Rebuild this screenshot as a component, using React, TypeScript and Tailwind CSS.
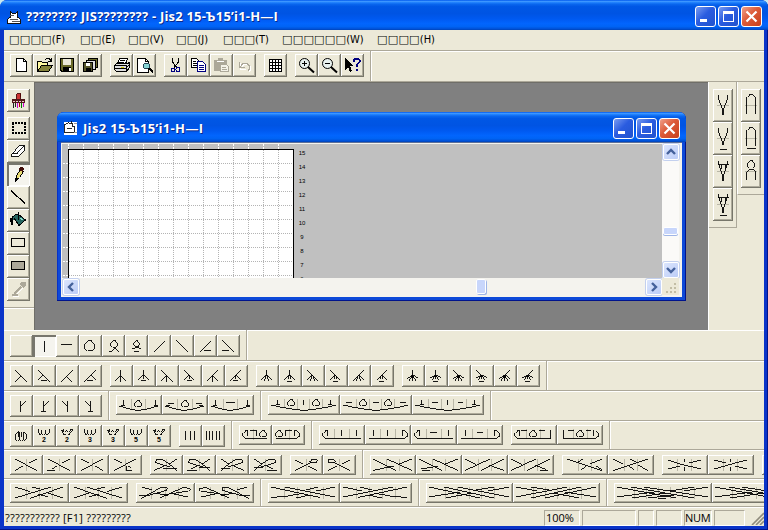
import React from 'react';

interface Glyph {
    d?: string;
    grey?: string;
    digit?: string;
    pressed?: boolean;
}

const titleGradient =
    'bg-[linear-gradient(180deg,#0058ee_0%,#3c96ff_5%,#1c7dfb_9%,#0a66ee_14%,#0057e5_22%,#0054e3_45%,#0059f0_62%,#0265fd_78%,#0064f6_88%,#0054dc_95%,#0043b8_100%)]';

const menus = [
    { label: '□□□□', letter: '(F)', width: 'w-[71px]' },
    { label: '□□', letter: '(E)', width: 'w-[48px]' },
    { label: '□□', letter: '(V)', width: 'w-[48px]' },
    { label: '□□', letter: '(J)', width: 'w-[47px]' },
    { label: '□□□', letter: '(T)', width: 'w-[59px]' },
    { label: '□□□□□□', letter: '(W)', width: 'w-[95px]' },
    { label: '□□□□', letter: '(H)', width: 'w-[70px]' },
];

const basic: Glyph[] = [
    {},
    { d: 'M11.5 6V17', pressed: true },
    { d: 'M5 9.5H16' },
    { d: 'M8.5 5.5H12.5L15.5 8.5V12.5L12.5 15.5H8.5L5.5 12.5V8.5Z' },
    { d: 'M7 16.5H8.5L13.5 12L15.5 9.5V7.5L13.5 5.5H10.5L8.5 7.5V9.5L10.5 12L15.5 16.5H17' },
    { d: 'M7 13.5H9L13.5 11L14.5 9V7.5L12.5 5.5H10.5L8.5 7.5V9L9.5 11L14 13.5H16M9 16.5H14' },
    { d: 'M5 17L16.5 5.5' },
    { d: 'M5 5L16.5 16.5' },
    { d: 'M5 17L16.5 5.5M10 15.5H17' },
    { d: 'M5 5L16.5 16.5M5 15.5H12' },
];

const twoTogether: Glyph[] = [
    { d: 'M5 5L16.5 16.5M5 17L11 11' },
    { d: 'M5 5L16.5 16.5M5 15L10 10M8 15.5H14' },
    { d: 'M17 5L5 17M16.5 16.5L10.5 10.5' },
    { d: 'M17 5L5 17M16.5 14.5L12 10M8 15.5H14' },
];

const threeTogether: Glyph[] = [
    { d: 'M10.5 5V17M10 11L5 16M11 11L16 16' },
    { d: 'M10.5 5V14M10 10L5 15M11 10L16 15M8 15.5H13' },
    { d: 'M5 5L16.5 16.5M10.5 10V17M10 11L5 16' },
    { d: 'M5 5L15 15M10.5 10V14M10 10L5 15M8 15.5H13' },
    { d: 'M16 5L5 16M10.5 10V17M11 11L16 16' },
    { d: 'M16 5L5 16M10.5 10V14M11 10L16 15M8 15.5H13' },
];

const fourTogether: Glyph[] = [
    { d: 'M10.5 5V10M10 10L5 15M11 10L16 15M10.5 10L8 16M10.5 10L13 16' },
    { d: 'M10.5 5V10M10 10L5 15M11 10L16 15M10.5 10L9 14M10.5 10L12 14M8 16.5H13' },
    { d: 'M5 5L16 16M10 10L5 15M10.5 10L8 16M10.5 10L13 16' },
    { d: 'M5 5L15 15M10 10L5 15M10.5 10L9 14M10.5 10L12 14M8 16.5H13' },
    { d: 'M16 5L5 16M11 10L16 15M10.5 10L8 16M10.5 10L13 16' },
    { d: 'M16 5L6 15M11 10L16 15M10.5 10L9 14M10.5 10L12 14M8 16.5H13' },
];

const fiveTogether: Glyph[] = [
    { d: 'M10.5 5V16M10.5 10L5 14M10.5 10L16 14M10.5 10L7 16M10.5 10L14 16M9 11.5H12M9 12.5H12' },
    { d: 'M10.5 5V14M10.5 10L5 13M10.5 10L16 13M10.5 10L7 15M10.5 10L14 15M9 11.5H12M8 16.5H13' },
    { d: 'M5 5L10.5 10.5V16M10.5 10L5 14M10.5 10L16 14M10.5 10L7 16M10.5 10L14 16M9 11.5H12M9 12.5H12' },
    { d: 'M5 5L10.5 10.5V14M10.5 10L5 13M10.5 10L16 13M10.5 10L7 15M10.5 10L14 15M9 11.5H12M8 16.5H13' },
    { d: 'M16 5L10.5 10.5V16M10.5 10L5 14M10.5 10L16 14M10.5 10L7 16M10.5 10L14 16M9 11.5H12M9 12.5H12' },
    { d: 'M16 5L10.5 10.5V14M10.5 10L5 13M10.5 10L16 13M10.5 10L7 15M10.5 10L14 15M9 11.5H12M8 16.5H13' },
];

const branches: Glyph[] = [
    { d: 'M10.5 6V17M11 11L16 6' },
    { d: 'M10.5 6V16M11 11L16 6M8 16.5H13' },
    { d: 'M11.5 6V17M11 11L6 6' },
    { d: 'M11.5 6V16M11 11L6 6M9 16.5H14' },
];

const fan3: Glyph[] = [
    { d: 'M3 11L14 14L22 15.5L31 14L42 11M7.5 5V10M5 10.5H9M39.5 5V10M38 10.5H42M20.5 5.5H23.5L25.5 7.5V9.5L23.5 11.5H20.5L18.5 9.5V7.5Z', grey: 'M15.5 4V15M29.5 4V15' },
    { d: 'M3 11L14 14L22 15.5L31 14L42 11M6 8.5H12M4 10.5H8M34 8.5H40M37 10.5H41M21.5 5.5H24.5L26.5 7.5V9.5L24.5 11.5H21.5L19.5 9.5V7.5Z', grey: 'M15.5 4V15M30.5 4V15' },
    { d: 'M3 11L14 14L22 15.5L31 14L42 11M7.5 5V10M5 10.5H9M39.5 5V10M38 10.5H42M18 7.5H27', grey: 'M15.5 4V15M29.5 4V15' },
];

const fan5: Glyph[] = [
    { d: 'M3 10L12 12L24 14L36 15.5L48 14L60 12L68 10M9.5 5V10M8 9.5H12M21.5 4.5H24.5L26.5 6.5V8.5L24.5 10.5H21.5L19.5 8.5V6.5ZM35.5 5V10M46.5 4.5H49.5L51.5 6.5V8.5L49.5 10.5H46.5L44.5 8.5V6.5ZM62.5 5V10M60 9.5H64', grey: 'M16.5 4V13M29.5 4V14M41.5 4V14M54.5 4V13' },
    { d: 'M3 10L12 12L24 14L36 15.5L48 14L60 12L68 10M6 7.5H12M21.5 4.5H24.5L26.5 6.5V8.5L24.5 10.5H21.5L19.5 8.5V6.5ZM33 7.5H39M46.5 4.5H49.5L51.5 6.5V8.5L49.5 10.5H46.5L44.5 8.5V6.5ZM60 7.5H66', grey: 'M16.5 4V13M29.5 4V14M41.5 4V14M54.5 4V13' },
    { d: 'M3 10L12 12L24 14L36 15.5L48 14L60 12L68 10M9.5 5V10M8 9.5H12M20 7.5H26M35.5 5V10M46 7.5H51M62.5 5V10M60 9.5H64', grey: 'M16.5 4V13M29.5 4V14M41.5 4V14M54.5 4V13' },
];

const coilUp = 'M5.5 4V7L7 9.5L8.5 7.5V4.5M8.5 7.5L10.5 9.5L12.5 7.5V4.5M12.5 7.5L14 9.5L16.5 7V4';
const coilDown = 'M5.5 5L7.5 4.5L8.5 7M9 7L10.5 4.5L12 7M12.5 7L14 4.5L16.5 5M5.5 5L8 9.5M16.5 5L13 9.5M8 9.5H10M12 9.5H14';
const wraps: Glyph[] = [
    { d: 'M7.5 6.5L5.5 8.5V13.5L7.5 15.5L9.5 13.5V7M8 6V12M9.5 13.5L11.5 15.5L13.5 13.5V7M13.5 15.5L16.5 13V8.5L14.5 6.5M11.5 7V12' },
    { d: coilUp, digit: '2' },
    { d: coilDown, digit: '2' },
    { d: coilUp, digit: '3' },
    { d: coilDown, digit: '3' },
    { d: coilUp, digit: '5' },
    { d: coilDown, digit: '5' },
];

const bars: Glyph[] = [{ d: 'M6.5 6V15M11.5 6V15M15.5 6V15' }, { d: 'M4.5 6V15M7.5 6V15M10.5 6V15M14.5 6V15M17.5 6V15' }];

const slip: Glyph[] = [
    { d: 'M9 5.5H6L3.5 8V11L6 13.5H28M8.5 5V11M11 5.5H17M17.5 5V11M22.5 5.5H25.5L27.5 7.5V9.5L25.5 11.5H22.5L20.5 9.5V7.5Z', grey: 'M14.5 4V15' },
    { d: 'M5.5 5.5H8.5L10.5 7.5V9.5L8.5 11.5H5.5L3.5 9.5V7.5ZM4 13.5H24L27.5 11V8L25 5.5H23M13.5 5V11M14 5.5H20M22.5 5V11', grey: 'M17.5 4V15' },
];

const pass: Glyph[] = [
    { d: 'M9 5.5H6L3.5 8V11L6 13.5H42M8.5 5V11M22.5 5V11M37.5 5V11', grey: 'M15.5 4V14M30.5 4V14' },
    { d: 'M4 13.5H39L42.5 11V8L40 5.5H37M8.5 5V11M22.5 5V11M37.5 5V11', grey: 'M15.5 4V14M30.5 4V14' },
    { d: 'M9 5.5H6L3.5 8V11L6 13.5H42M8.5 5V11M19 7.5H26M37.5 5V11', grey: 'M15.5 4V14M30.5 4V14' },
    { d: 'M4 13.5H39L42.5 11V8L40 5.5H37M8.5 5V11M20 7.5H26M37.5 5V11', grey: 'M15.5 4V14M30.5 4V14' },
];

const yarnOver: Glyph[] = [
    { d: 'M8 5.5H6L3.5 8V11L6 13.5H39.5V5M8.5 5V11M10 5.5H16M28 5.5H34M20.5 5.5H23.5L25.5 7.5V9.5L23.5 11.5H20.5L18.5 9.5V7.5Z', grey: 'M15.5 4V14M29.5 4V14' },
    { d: 'M6.5 5V13.5H38L41.5 11V8L39 5.5M36.5 5V11M11 5.5H17M29 5.5H34M21.5 5.5H24.5L26.5 7.5V9.5L24.5 11.5H21.5L19.5 9.5V7.5Z', grey: 'M16.5 4V14M30.5 4V14' },
];

const cross2: Glyph[] = [
    { d: 'M5 4L27 15.5M27 4L19 8M13 11L5 15.5', grey: 'M16.5 4V16' },
    { d: 'M5 4L27 15.5M27 4L19 8M14 11L9 14M4 15.5H12', grey: 'M16.5 4V16' },
    { d: 'M27 4L5 15.5M5 4L13 8M19 11L27 15.5', grey: 'M16.5 4V16' },
    { d: 'M27 4L5 15.5M5 4L13 8M17.5 11V15.5H23M19 11L22 13', grey: 'M16.5 4V16' },
];

const crossTwist: Glyph[] = [
    { d: 'M20 12L5 7.5L6 4.5H12L18 8L27 15.5M27 4L19 9M14 11L4 15.5M13 13.5H27', grey: 'M16.5 4V16' },
    { d: 'M20 12L5 7.5L6 4.5H12L18 8L27 15.5M27 4L19 9M14 11L8 14M4 15.5H14M16 12.5H27', grey: 'M16.5 4V16' },
    { d: 'M12 12L27 7.5L26 4.5H20L14 8L5 15.5M5 4L13 9M18 11L28 15.5M5 13.5H14', grey: 'M16.5 4V16' },
    { d: 'M12 12L27 7.5L26 4.5H20L14 8L5 15.5M5 4L13 9M18 11L24 14M18 15.5H28M5 12.5H14', grey: 'M16.5 4V16' },
];

const crossLoop: Glyph[] = [
    { d: 'M5 5L13 9M18 11L27 15.5M5 15.5L20 8L26 7.5L27 4.5H21L19 6.5L22 8', grey: 'M16.5 4V16' },
    { d: 'M27 5L19 9M14 11L5 15.5M27 15.5L12 8L6 7.5L5 4.5H11L13 6.5L10 8', grey: 'M16.5 4V16' },
];

const cross3: Glyph[] = [
    { d: 'M3 4L26 15.5M17 4L42 15.5M42 4L28 9.5M24 11L16 12.5L3 15.5', grey: 'M16.5 4V16M29.5 4V16' },
    { d: 'M3 4L26 15.5M17 4L42 15.5M42 4L28 9.5M22 11L14 12.5L5 14M6 15.5H14', grey: 'M16.5 4V16M29.5 4V16' },
    { d: 'M42 4L19 15.5M28 4L3 15.5M3 4L14 9.5M27 10L42 15.5', grey: 'M16.5 4V16M29.5 4V16' },
    { d: 'M42 4L19 15.5M28 4L3 15.5M3 4L14 9.5M27 10L38 14.5M32 15.5H40', grey: 'M16.5 4V16M29.5 4V16' },
];

const cross3Over: Glyph[] = [
    { d: 'M5 4L40 15.5M40 4L28 9M21 4L16 7M24 11L19 15M40 15L34 11', grey: 'M16.5 4V16M29.5 4V16' },
    { d: 'M40 4L5 15.5M5 4L15 9M22 4L28 7M21 11L26 15M30 10L40 15.5', grey: 'M16.5 4V16M29.5 4V16' },
];

const crossCentre: Glyph[] = [
    { d: 'M6 5L18 9L39 14M39 5L27 8M18 11L6 14M22.5 4V7M22.5 12V16', grey: 'M15.5 4V16M29.5 4V16' },
    { d: 'M39 5L27 8L6 14M6 5L18 8M27 11L39 14M22.5 4V7M22.5 12V16', grey: 'M15.5 4V16M29.5 4V16' },
    { d: 'M6 5L18 9L39 14M39 5L27 8M18 11L6 14', grey: 'M15.5 4V16' },
];

const cable4: Glyph[] = [
    { d: 'M53 4L20 15.5M41 4L5 15M5 4L20 8.5M22 4L30 6M28 11L38 14M38 10L53 15', grey: 'M16.5 4V16M29.5 4V16M42.5 4V16' },
    { d: 'M5 4L38 15.5M18 4L53 15M53 4L38 8.5M36 4L28 6M30 11L20 14M20 10L5 15', grey: 'M16.5 4V16M29.5 4V16M42.5 4V16' },
];

const cable4Twist: Glyph[] = [
    { d: 'M3 12.5H12L30 7.5L31 4.5H25L5 15.5M27 12L52 8L54 5.5L47 4.5L24 15M6 4L16 7M20 10L32 13M38 11L52 14', grey: 'M15.5 4V16M29.5 4V16M42.5 4V16' },
    { d: 'M55 12.5H46L28 7.5L27 4.5H33L54 15.5M31 12L6 8L4 5.5L11 4.5L34 15M52 4L42 7M38 10L26 13M20 11L6 14', grey: 'M15.5 4V16M29.5 4V16M42.5 4V16' },
];

const cable5: Glyph[] = [
    { d: 'M3 4L52 14.5M17 4L67 14M67 4L48 8M50 4L38 7M36 10L20 13L3 14.5M42 12L28 15', grey: 'M16.5 4V16M29.5 4V16M42.5 4V16M55.5 4V16' },
    { d: 'M67 4L18 14.5M53 4L3 14M3 4L22 8M20 4L32 7M34 10L50 13L67 14.5M28 12L42 15', grey: 'M16.5 4V16M29.5 4V16M42.5 4V16M55.5 4V16' },
];

const cable6: Glyph[] = [
    { d: 'M3 4L54 15M18 4L68 15M32 4L83 14M83 4L62 8M68 4L50 7M46 10L20 15M34 9L3 14', grey: 'M19.5 4V16M31.5 4V16M43.5 4V16M55.5 4V16M68.5 4V16' },
    { d: 'M83 4L32 15M68 4L18 15M54 4L3 14M3 4L24 8M18 4L36 7M40 10L66 15M52 9L83 14', grey: 'M20.5 4V16M32.5 4V16M44.5 4V16M56.5 4V16M68.5 4V16' },
];

const cable7: Glyph[] = [
    { d: 'M3 4L62 15M17 4L80 15M30 4L94 14M94 4L70 8M80 4L56 8M52 10L18 15M40 9L3 14M60 12L34 15M44 15.5H52', grey: 'M20.5 4V16M32.5 4V16M44.5 4V16M56.5 4V16M68.5 4V16M80.5 4V16' },
    { d: 'M3 4L62 15M17 4L80 15M30 4L94 14M94 4L56 8M52 10L18 15M40 9L3 14', grey: 'M20.5 4V16M32.5 4V16M44.5 4V16M56.5 4V16' },
];

const ToolButton: React.FC<{ size: string; pressed?: boolean; children?: React.ReactNode }> = ({ size, pressed, children }) => (
    <button
        className={`${size} block shrink-0 ${
            pressed
                ? 'bg-[#f5f4ee] shadow-[inset_2px_2px_#77766d,inset_-1px_-1px_#fff]'
                : 'bg-[#ece9d8] shadow-[inset_-1px_-1px_#77766a,inset_1px_1px_#fff,inset_-2px_-2px_#aeab9b]'
        }`}
    >
        {children}
    </button>
);

const StitchButtons: React.FC<{ items: Glyph[]; size: string }> = ({ items, size }) => (
    <div className="flex shrink-0">
        {items.map((item, index) => (
            <ToolButton key={index} size={size} pressed={item.pressed}>
                <svg className="block h-full w-full" fill="none" strokeWidth="0.9" shapeRendering="crispEdges">
                    {item.grey && <path d={item.grey} stroke="#b4b1a2" />}
                    {item.d && <path d={item.d} stroke="#000" />}
                    {item.digit && (
                        <text x="9" y="17" fontSize="7" fontWeight="700" fill="#000" fontFamily="Liberation Sans">
                            {item.digit}
                        </text>
                    )}
                </svg>
            </ToolButton>
        ))}
    </div>
);

const Divider = ({ className = '' }: { className?: string }) => (
    <div className={`w-[2px] shrink-0 self-stretch border-l border-r border-l-[#aca899] border-r-white ${className}`} />
);

const Row: React.FC<{ height: string; children: React.ReactNode }> = ({ height, children }) => (
    <div className={`${height} flex shrink-0 items-start overflow-hidden border-b border-b-[#aca899] pl-[6px] shadow-[inset_0_1px_#fff]`}>
        {children}
    </div>
);

const small = 'w-[23px] h-[23px]';
const stitch = 'w-[23px] h-[22px]';

const toolbarIcons: React.ReactNode[][] = [
    [
        <g key="new"><path d="M6.5 4.5H13.5L16.5 7.5V17.5H6.5Z" fill="#fff" stroke="#000" /><path d="M13.5 4.5V7.5H16.5" stroke="#000" /></g>,
        <g key="open"><path d="M4.5 17.5V7.5H8.5L9.5 8.5H14.5V11.5" fill="#fff9a0" stroke="#000" /><path d="M4.5 17.5L8.5 11.5H19.5L15.5 17.5Z" fill="#85833a" stroke="#000" /><path d="M12 5.5L13.5 4.5H16L18.5 7M18.5 4V7.5H15" stroke="#000" /></g>,
        <g key="save"><path d="M4.5 4.5H17.5V17.5H6L4.5 16Z" fill="#6b6b2a" stroke="#000" strokeWidth="1.6" /><path d="M7 5H15V11H7Z" fill="#ece9d8" /><path d="M7 13H15V18H7Z" fill="#000" /><path d="M13 14H15V17H13Z" fill="#fff" /></g>,
        <g key="all"><path d="M9.5 4.5H18.5V13.5H9.5Z" fill="#6b6b2a" stroke="#000" /><path d="M7.5 6.5H16.5V15.5H7.5Z" fill="#ddd" stroke="#000" /><path d="M4.5 8.5H13.5V17.5H4.5Z" fill="#55552a" stroke="#000" /><path d="M7 9H11V12H7Z" fill="#fff" /><path d="M7 14H12V17H7Z" fill="#000" /></g>,
    ],
    [
        <g key="print"><path d="M7.5 10L9.5 4.5H17.5L15.5 10" fill="#fff" stroke="#000" /><path d="M10 6.5H15M9 8.5H14" stroke="#000" /><path d="M4.5 11.5L6.5 9.5H17.5L19.5 8.5V13.5L16.5 17.5H6.5L4.5 15.5Z" fill="#ddd" stroke="#000" /><path d="M4 11.5H16.5V17M5 14.5H16M19 11.5L16 13.5" stroke="#000" /><path d="M11 13H14" stroke="#d5c800" /></g>,
        <g key="preview"><path d="M4.5 4.5H12.5L15.5 7.5V18.5H4.5Z" fill="#fff" stroke="#000" /><path d="M12.5 4.5V7.5H15.5" stroke="#000" /><circle cx="13.5" cy="12" r="3" fill="#86d4d4" stroke="#245" /><path d="M16 14L20 18.5" stroke="#000" strokeWidth="2" /></g>,
    ],
    [
        <g key="cut"><path d="M8.5 4V8L13 14M14.5 4V8L10 14" stroke="#000" /><circle cx="9" cy="16" r="2" stroke="#000080" /><circle cx="14" cy="15.5" r="2" stroke="#000080" /></g>,
        <g key="copy"><path d="M4.5 4.5H9.5L12.5 7.5V13.5H4.5Z" fill="#fff" stroke="#000" /><path d="M6 7.5H9M6 9.5H10M6 11.5H10" stroke="#000" /><path d="M10.5 7.5H15.5L18.5 10.5V17.5H10.5Z" fill="#fff" stroke="#000080" /><path d="M12 11.5H17M12 13.5H17M12 15.5H17" stroke="#000080" /></g>,
        <g key="paste"><path d="M4 6H17V17H4Z" fill="#aca899" /><path d="M8 4H13V7H8Z" fill="#aca899" /><path d="M7 7.5H14" stroke="#fff" /><path d="M10.5 10.5H16.5L18.5 12.5V17.5H10.5Z" fill="#f4f2e8" stroke="#aca899" /><path d="M12 13.5H16M12 15.5H17" stroke="#aca899" /></g>,
        <g key="undo"><path d="M6.5 8V14H12M7 13L10 9.5H14L16.5 12V15L15 17" stroke="#fff" transform="translate(1 1)" /><path d="M6.5 8V13.5H12M7 13L10 9.5H14L16.5 12V15L15 17" stroke="#aca899" /></g>,
    ],
    [<g key="grid"><path d="M5.5 5.5H17.5V17.5H5.5ZM8.5 5V18M11.5 5V18M14.5 5V18M5 8.5H18M5 11.5H18M5 14.5H18" fill="#fff" stroke="#000" /></g>],
    [
        <g key="in" shapeRendering="auto"><circle cx="9.5" cy="9.5" r="5" fill="#e8f1ee" stroke="#000" /><path d="M7 9.5H12M9.5 7V12" stroke="#000" /><path d="M13 13L19 18.5" stroke="#000" strokeWidth="2" /></g>,
        <g key="out" shapeRendering="auto"><circle cx="9.5" cy="9.5" r="5" fill="#e8f1ee" stroke="#000" /><path d="M7 9.5H12" stroke="#000" /><path d="M13 13L19 18.5" stroke="#000" strokeWidth="2" /></g>,
        <g key="help"><path d="M4 4V16L7 13L9 18L11 17L9 12H13Z" fill="#000" /><path d="M12.5 8V6L14 4.5H17L18.5 6V8L15.5 11V13M15.5 15V17" stroke="#000080" strokeWidth="2" /></g>,
    ],
];

const sideIcons = [
    <g key="select"><path d="M5 6H19M5 16H19" stroke="#000" strokeWidth="2" strokeDasharray="2 1" /><path d="M6 6V17M18 6V17" stroke="#000" strokeWidth="2" strokeDasharray="2 1" /></g>,
    <g key="eraser"><path d="M4.5 13.5L11.5 5.5H17.5V9.5L10.5 16.5H4.5Z" fill="#fff" stroke="#000" strokeWidth="0.9" /><path d="M4.5 13.5H10L17 6" stroke="#000" strokeWidth="0.9" /></g>,
    <g key="pencil"><path d="M8.5 17.5L9.5 12.5L13.5 6.5L16.5 8.5L12.5 14.5Z" fill="#e8dc74" stroke="#000" /><path d="M13 4H16L17 6L16 9L12 7Z" fill="#400c08" /><path d="M8 15V19L11 16Z" fill="#000" /></g>,
    <g key="line"><path d="M4 4.5L18 17.5" stroke="#000" strokeWidth="1.3" /></g>,
    <g key="fill"><path d="M5.5 15V8L8 6L11 5L18.5 11L12 16.5L7 9" fill="#27665f" stroke="#000" /><path d="M3 9H6V16H4Z" fill="#000" /><path d="M11 3V11" stroke="#000" /><path d="M13 9L16 11" stroke="#8dc" /></g>,
    <g key="rect"><path d="M4.5 6.5H17.5V14.5H4.5Z" stroke="#000" /></g>,
    <g key="rectfill"><path d="M4.5 6.5H17.5V14.5H4.5Z" fill="#aca899" stroke="#000" /></g>,
    <g key="picker"><path d="M5 16.5H11M7 16L14 9" stroke="#aca899" strokeWidth="2" /><path d="M14 4H19V8L16 10L13 7Z" fill="#aca899" /><path d="M6 18.5H12M10 16L16 10" stroke="#fff" /></g>,
];

const raised = [
    'M5.5 6V10L9.5 20V26M14.5 6V10L10.5 20V26',
    'M5.5 6V10L9.5 20V23M14.5 6V10L10.5 20V23M7 27.5H14',
    'M5.5 6V9L9.5 20V26M14.5 6V9L10.5 20V26M5 9.5H16M8.5 10V14M12.5 10V14',
    'M5.5 6V9L9.5 20V25M14.5 6V9L10.5 20V25M5 9.5H16M8.5 10V14M12.5 10V14M7 27.5H14',
];

const slipped = [
    'M5.5 25V8L8 5.5H12L14.5 8V25',
    'M5.5 24V8L8 5.5H12L14.5 8V24M6 26.5H15',
    'M5.5 25V17L8.5 14H11.5L14.5 17V25M8.5 5.5H11.5L13.5 7.5V10.5L11.5 13M8.5 5.5L6.5 7.5V10.5L8.5 13',
];

const TallButton = ({ d }: { d: string }) => (
    <ToolButton size="w-[20px] h-[33px]">
        <svg className="block h-full w-full" fill="none" strokeWidth="0.9" shapeRendering="crispEdges">
            <path d="M4 16.5H16" stroke="#b4b1a2" />
            <path d={d} stroke="#000" />
        </svg>
    </ToolButton>
);

const WindowControls = () => (
    <div className="flex gap-[2px]">
        <span className="h-[21px] w-[21px] rounded-[3px] border border-white bg-[linear-gradient(135deg,#7a9cf0,#2a5ce0_45%,#2153cd)]">
            <span className="ml-[4px] mt-[12px] block h-[3px] w-[7px] bg-white" />
        </span>
        <span className="h-[21px] w-[21px] rounded-[3px] border border-white bg-[linear-gradient(135deg,#7a9cf0,#2a5ce0_45%,#2153cd)]">
            <span className="ml-[4px] mt-[4px] block h-[11px] w-[11px] border border-t-[3px] border-white" />
        </span>
        <span className="h-[21px] w-[21px] rounded-[3px] border border-white bg-[linear-gradient(135deg,#f0a08a,#dc5a38_45%,#c8401c)]">
            <svg className="block h-[19px] w-[19px]" viewBox="0 0 19 19">
                <path d="M4.5 4.5L14.5 14.5M14.5 4.5L4.5 14.5" stroke="#fff" strokeWidth="2.2" />
            </svg>
        </span>
    </div>
);

const ScrollArrow = ({ d }: { d: string }) => (
    <span className="block h-[16px] w-[16px] shrink-0 rounded-[2px] border border-white bg-[linear-gradient(135deg,#dbe5fd,#bccdf7)] shadow-[0_0_0_1px_#c3d0ee]">
        <svg className="block h-[14px] w-[14px]" viewBox="0 0 14 14" fill="none">
            <path d={d} stroke="#44619b" strokeWidth="2.4" />
        </svg>
    </span>
);

const columns = Array.from({ length: 15 }, (_, i) => i);
const lines = Array.from({ length: 9 }, (_, i) => i);
const rowNumbers = [15, 14, 13, 12, 11, 10, 9, 8, 7, 6];

const PatternWindow = () => (
    <div className="ml-[23px] mt-[30px] flex h-[189px] w-[629px] flex-col overflow-hidden rounded-t-[7px] bg-[#0d49d8] shadow-[inset_-1px_-1px_#00138c,inset_1px_0_#0831c8]">
        <div className={`${titleGradient} flex h-[30px] shrink-0 items-center pl-[6px] pr-[6px] pt-[3px]`}>
            <svg className="block h-[16px] w-[16px]" fill="none" shapeRendering="crispEdges">
                <path d="M1 1H14V14H1Z" fill="#fff" />
                <path d="M1.5 3V11.5H9.5L11.5 9.5V5.5H9.5V2.5H6.5L5.5 0.5L3.5 2.5ZM4 7.5H9M8 0V3" stroke="#111" strokeWidth="0.9" />
                <path d="M11 2.5H14M11 11.5H14" stroke="#9a9a9a" />
            </svg>
            <span className="ml-[4px] flex-1 whitespace-pre text-[13px] font-bold tracking-[0.32px] text-white [text-shadow:1px_1px_#0a2a8c]">Jis2 15-Ъ15’i1-H—I</span>
            <WindowControls />
        </div>
        <div className="mx-[4px] mb-[4px] flex flex-1 flex-col bg-[#f4f3ee] pt-[2px] pl-[1px] pr-[3px] shadow-[inset_0_1px_#5c6f99]">
            <div className="flex h-[134px]">
                <div className="flex h-full flex-1 overflow-hidden bg-[#c0c0c0]">
                    <svg className="block h-[134px] w-[232px] shrink-0" shapeRendering="crispEdges" fill="none">
                        <path d="M6 5H231V134H6Z" fill="#fff" />
                        {columns.map((c) => (
                            <path key={c} d={`M${6.5 + c * 15} 0V5`} stroke="#fff" strokeDasharray="2 1" />
                        ))}
                        {columns.slice(1).map((c) => (
                            <path key={c} d={`M${6.5 + c * 15} 6V134`} stroke="#b4b4b4" strokeDasharray="1 1" />
                        ))}
                        {lines.map((r) => (
                            <path key={r} d={`M7 ${19.5 + r * 14}H231`} stroke="#b4b4b4" strokeDasharray="1 1" />
                        ))}
                        {lines.map((r) => (
                            <path key={r} d={`M1 ${19.5 + r * 14}H6`} stroke="#fff" strokeDasharray="2 1" />
                        ))}
                        <path d="M6.5 134V5.5H231.5V134" stroke="#000" />
                    </svg>
                    <div className="w-[16px] pt-[2px] text-center font-['Liberation_Sans'] text-[6px] leading-[14px] text-black">
                        {rowNumbers.map((n) => (
                            <div key={n}>{n}</div>
                        ))}
                    </div>
                </div>
                <div className="flex w-[17px] flex-col items-center bg-[#fbfaf8]">
                    <ScrollArrow d="M3 9L7 5L11 9" />
                    <span className="mt-[67px] h-[8px] w-[15px] rounded-[2px] border border-white bg-[#c8d6fb] shadow-[0_1px_#9fb5e6]" />
                    <span className="flex-1" />
                    <ScrollArrow d="M3 5L7 9L11 5" />
                </div>
            </div>
            <div className="flex h-[17px] items-center">
                <span className="w-[1px]" />
                <ScrollArrow d="M9 3L5 7L9 11" />
                <span className="ml-[397px] h-[15px] w-[10px] rounded-[2px] border border-white bg-[#c8d6fb] shadow-[1px_1px_#9fb5e6]" />
                <span className="flex-1" />
                <ScrollArrow d="M5 3L9 7L5 11" />
                <svg className="block h-[17px] w-[17px] bg-[#ece9d8]" shapeRendering="crispEdges">
                    <path d="M12 5h2v2h-2zM8 9h2v2h-2zM12 9h2v2h-2zM4 13h2v2h-2zM8 13h2v2h-2zM12 13h2v2h-2z" fill="#c2bda5" />
                </svg>
            </div>
        </div>
    </div>
);

const App: React.FC = () => (
    <div className="h-[530px] w-[768px] overflow-hidden bg-[#c8e8f0] font-['Open_Sans','DejaVu_Sans',sans-serif] text-[11px] text-black">
        <div className="flex h-full w-full flex-col overflow-hidden rounded-t-[7px] bg-[#0a34c8] shadow-[inset_-1px_-1px_#00138c]">
            <header className={`${titleGradient} flex h-[30px] shrink-0 items-center pl-[6px] pr-[6px] pt-[3px]`}>
                <svg className="block h-[16px] w-[16px]" fill="none" shapeRendering="crispEdges">
                    <path d="M1.5 10.5L3.5 8.5H4.5V2.5L6.5 4.5H9.5L11.5 2.5V8.5H12.5L14.5 10.5V14.5H1.5Z" fill="#fff" stroke="#111" />
                    <path d="M4 6.5H8M4 10.5H12M6 12.5H14" stroke="#555" />
                </svg>
                <span className="ml-[4px] flex-1 whitespace-pre text-[13px] font-bold tracking-[0.2px] text-white [text-shadow:1px_1px_#0a2a8c]">???????? JIS???????? - Jis2 15-Ъ15’i1-H—I</span>
                <WindowControls />
            </header>

            <div className="mx-[4px] mb-[4px] flex min-h-0 flex-1 flex-col bg-[#ece9d8]">
                <nav className="flex h-[21px] shrink-0 items-center border-b border-b-[#aca899] pl-[5px]">
                    {menus.map((menu, index) => (
                        <span key={index} className={`${menu.width} flex shrink-0 items-center whitespace-nowrap`}>
                            <span className="font-['DejaVu_Sans'] text-[11px] tracking-[0.3px]">{menu.label}</span>
                            <span className="font-['DejaVu_Sans_Condensed','DejaVu_Sans'] text-[11px]">{menu.letter}</span>
                        </span>
                    ))}
                </nav>

                <Row height="h-[31px]">
                    <div className="flex gap-2 pt-[3px]">
                        {toolbarIcons.map((group, index) => (
                            <div key={index} className="flex">
                                {group.map((icon, i) => (
                                    <ToolButton key={i} size={small}>
                                        <svg className="block h-full w-full" fill="none" shapeRendering="crispEdges">{icon}</svg>
                                    </ToolButton>
                                ))}
                            </div>
                        ))}
                    </div>
                    <Divider className="ml-[6px]" />
                </Row>

                <main className="flex h-[248px] shrink-0">
                    <div className="w-[30px] pl-[3px] pt-[7px]">
                        <ToolButton size={small}>
                            <svg className="block h-full w-full" fill="none" shapeRendering="crispEdges">
                                <path d="M9.5 4.5H13.5V7.5L12.5 10H10.5L9.5 7.5Z" fill="#c33" stroke="#400" strokeWidth="0.9" />
                                <path d="M5 10H18V14H5Z" fill="#501818" />
                                <path d="M6 12H17" stroke="#e8c8c8" strokeDasharray="2 1" />
                                <path d="M6.5 14V19M8.5 14V18" stroke="#222" />
                                <path d="M10.5 14V19M16.5 14V18" stroke="#c0c" />
                                <path d="M12.5 14V18" stroke="#b00" />
                                <path d="M14.5 14V19" stroke="#070" />
                            </svg>
                        </ToolButton>
                        <div className="mt-[5px]">
                            {sideIcons.map((icon, index) => (
                                <ToolButton key={index} size={small} pressed={index === 2}>
                                    <svg className="block h-full w-full" fill="none" shapeRendering="crispEdges">{icon}</svg>
                                </ToolButton>
                            ))}
                        </div>
                        <div className="-ml-[3px] mt-[6px] h-[2px] border-b border-t border-b-white border-t-[#aca899]" />
                    </div>
                    <div className="h-full w-[674px] shrink-0 overflow-hidden bg-[#808080] shadow-[inset_1px_1px_#6f6e68]">
                        <PatternWindow />
                    </div>
                    <div className="flex flex-1 items-start border-l border-l-white">
                        <div className="h-[146px] w-[28px] border-b border-r border-[#aca899] pl-[4px] pt-[7px]">
                            {raised.map((d) => (
                                <TallButton key={d} d={d} />
                            ))}
                        </div>
                        <div className="h-[113px] flex-1 border-b border-l border-b-[#aca899] border-l-white pl-[3px] pt-[7px]">
                            {slipped.map((d) => (
                                <TallButton key={d} d={d} />
                            ))}
                        </div>
                    </div>
                </main>

                <Row height="h-[31px]">
                    <div className="pt-[5px]">
                        <StitchButtons items={basic} size={stitch} />
                    </div>
                    <Divider className="ml-[6px]" />
                </Row>

                <Row height="h-[30px]">
                    <div className="flex gap-2 pt-[4px]">
                        <StitchButtons items={twoTogether} size={stitch} />
                        <StitchButtons items={threeTogether} size={stitch} />
                        <StitchButtons items={fourTogether} size={stitch} />
                        <StitchButtons items={fiveTogether} size={stitch} />
                    </div>
                    <Divider className="ml-[6px]" />
                </Row>

                <Row height="h-[30px]">
                    <div className="flex pt-[4px]">
                        <StitchButtons items={branches} size={stitch} />
                    </div>
                    <Divider className="ml-[6px]" />
                    <div className="ml-[6px] mr-[6px] pt-[4px]">
                        <StitchButtons items={fan3} size="w-[46px] h-[20px]" />
                    </div>
                    <Divider />
                    <div className="ml-[6px] pt-[4px]">
                        <StitchButtons items={fan5} size="w-[72px] h-[20px]" />
                    </div>
                    <Divider className="ml-[6px]" />
                </Row>

                <Row height="h-[29px]">
                    <div className="flex gap-2 pt-[4px]">
                        <StitchButtons items={wraps} size={stitch} />
                        <StitchButtons items={bars} size={stitch} />
                    </div>
                    <Divider className="ml-[6px]" />
                    <div className="ml-[6px] pt-[4px]">
                        <StitchButtons items={slip} size="w-[33px] h-[20px]" />
                    </div>
                    <Divider className="ml-[6px]" />
                    <div className="ml-[6px] pt-[4px]">
                        <StitchButtons items={pass} size="w-[46px] h-[20px]" />
                    </div>
                    <div className="ml-[8px] pt-[4px]">
                        <StitchButtons items={yarnOver} size="w-[46px] h-[20px]" />
                    </div>
                    <Divider className="ml-[6px]" />
                </Row>

                <Row height="h-[29px]">
                    <div className="flex gap-2 pt-[5px]">
                        <StitchButtons items={cross2} size="w-[33px] h-[20px]" />
                        <StitchButtons items={crossTwist} size="w-[33px] h-[20px]" />
                        <StitchButtons items={crossLoop} size="w-[33px] h-[20px]" />
                    </div>
                    <Divider className="ml-[6px]" />
                    <div className="ml-[6px] flex gap-2 pt-[5px]">
                        <StitchButtons items={cross3} size="w-[46px] h-[20px]" />
                        <StitchButtons items={cross3Over} size="w-[46px] h-[20px]" />
                        <StitchButtons items={crossCentre.slice(0, 2)} size="w-[46px] h-[20px]" />
                        <StitchButtons items={crossCentre.slice(2)} size="w-[46px] h-[20px]" />
                    </div>
                </Row>

                <Row height="h-[28px]">
                    <div className="flex gap-2 pt-[4px]">
                        <StitchButtons items={cable4} size="w-[59px] h-[20px]" />
                        <StitchButtons items={cable4Twist} size="w-[59px] h-[20px]" />
                    </div>
                    <Divider className="ml-[6px]" />
                    <div className="ml-[6px] pt-[4px]">
                        <StitchButtons items={cable5} size="w-[72px] h-[20px]" />
                    </div>
                    <Divider className="ml-[6px]" />
                    <div className="ml-[6px] pt-[4px]">
                        <StitchButtons items={cable6} size="w-[87px] h-[20px]" />
                    </div>
                    <Divider className="ml-[6px]" />
                    <div className="ml-[6px] pt-[4px]">
                        <StitchButtons items={cable7} size="w-[98px] h-[20px]" />
                    </div>
                </Row>

                <footer className="flex flex-1 items-center gap-[2px] pl-[1px] pt-[2px] leading-[14px] shadow-[inset_0_1px_#fff]">
                    <span className="flex-1 whitespace-nowrap tracking-[0.24px]">??????????? [F1] ?????????</span>
                    <span className="h-[16px] w-[36px] border border-b-white border-l-[#aca899] border-r-white border-t-[#aca899] pl-px">100%</span>
                    <span className="h-[16px] w-[54px] border border-b-white border-l-[#aca899] border-r-white border-t-[#aca899]" />
                    <span className="h-[16px] w-[16px] border border-b-white border-l-[#aca899] border-r-white border-t-[#aca899]" />
                    <span className="h-[16px] w-[26px] border border-b-white border-l-[#aca899] border-r-white border-t-[#aca899]" />
                    <span className="h-[16px] w-[28px] border border-b-white border-l-[#aca899] border-r-white border-t-[#aca899] tracking-[-0.3px]">NUM</span>
                    <span className="h-[16px] w-[31px] border border-b-white border-l-[#aca899] border-r-white border-t-[#aca899]" />
                    <svg className="ml-[3px] block h-[14px] w-[14px]">
                        <path d="M2 14L14 2M6 14L14 6M10 14L14 10" stroke="#8f8c7c" strokeWidth="1.6" />
                    </svg>
                </footer>
            </div>
        </div>
    </div>
);

export default App;
